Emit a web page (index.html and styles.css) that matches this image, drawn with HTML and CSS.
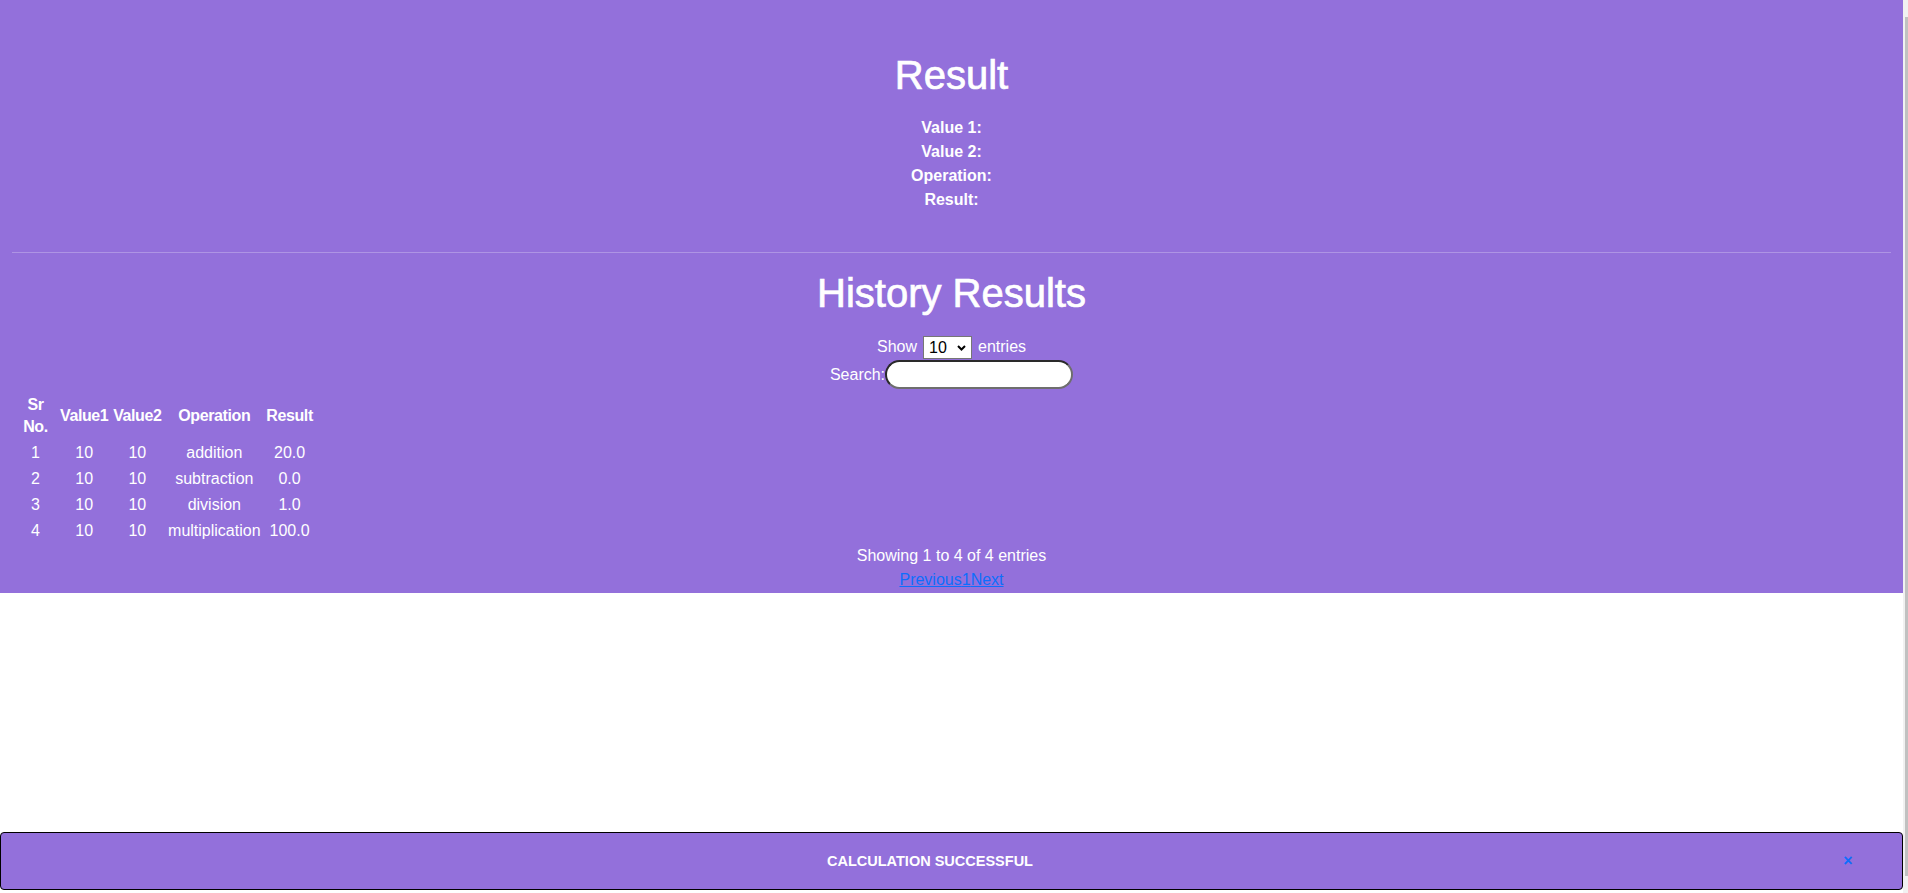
FILE: index.html
```html
<!DOCTYPE html>
<html lang="en">
<head>
<meta charset="utf-8">
<title>Result</title>
<link rel="stylesheet" href="styles.css">
</head>
<body>
<div class="page">
  <main class="panel">
    <section class="result">
      <h1 class="title">Result</h1>
      <div class="values">
        <div><b>Value 1:</b> <span></span></div>
        <div><b>Value 2:</b> <span></span></div>
        <div><b>Operation:</b> <span></span></div>
        <div><b>Result:</b> <span></span></div>
      </div>
    </section>
    <hr class="divider">
    <section class="history">
      <h1 class="title">History Results</h1>
      <div class="length">
        <span>Show</span>
        <span class="select-wrap">
          <select class="select">
            <option>10</option>
            <option>25</option>
            <option>50</option>
            <option>100</option>
          </select>
          <svg class="chev" width="9" height="6" viewBox="0 0 9 6"><path d="M1 1l3.5 3.5L8 1" fill="none" stroke="#000" stroke-width="2"/></svg>
        </span>
        <span>entries</span>
      </div>
      <div class="search"><label class="search-label">Search:<input class="search-input" type="search"></label></div>
      <table class="grid">
        <thead>
          <tr>
            <th class="c-sr">Sr No.</th>
            <th class="c-v1">Value1</th>
            <th class="c-v2">Value2</th>
            <th class="c-op">Operation</th>
            <th class="c-res">Result</th>
          </tr>
        </thead>
        <tbody>
          <tr><td>1</td><td>10</td><td>10</td><td>addition</td><td>20.0</td></tr>
          <tr><td>2</td><td>10</td><td>10</td><td>subtraction</td><td>0.0</td></tr>
          <tr><td>3</td><td>10</td><td>10</td><td>division</td><td>1.0</td></tr>
          <tr><td>4</td><td>10</td><td>10</td><td>multiplication</td><td>100.0</td></tr>
        </tbody>
      </table>
      <div class="info">Showing 1 to 4 of 4 entries</div>
      <div class="paginate"><a href="#" class="pg">Previous</a><a href="#" class="pg">1</a><a href="#" class="pg">Next</a></div>
    </section>
  </main>
</div>
<div class="toast">
  <span class="toast-msg">CALCULATION SUCCESSFUL</span>
  <button class="toast-close" type="button">×</button>
</div>
<div class="scrollbar"><div class="thumb"></div></div>
</body>
</html>
```
FILE: styles.css
```css
html, body {
  margin: 0;
  padding: 0;
  background: #fff;
}
body {
  font-family: "Liberation Sans", Arial, sans-serif;
  font-size: 16px;
  line-height: 24px;
  color: #fff;
}
.page {
  margin-right: 5px;
}
.panel {
  display: block;
  background: #9370db;
  padding: 51px 12px 1px;
  text-align: center;
}
.title {
  font-size: 40px;
  font-weight: 400;
  line-height: 48px;
  margin: 0 0 8px;
  -webkit-text-stroke: 0.7px #fff;
}
.values {
  margin: 17px 0 40px;
  font-weight: 700;
}
.values b {
  font-weight: 700;
}
.divider {
  border: 0;
  border-top: 1px solid rgba(255, 255, 255, 0.25);
  height: 0;
  margin: 16px 0;
}
.length {
  margin-top: 18px;
  height: 24px;
  display: flex;
  justify-content: center;
  align-items: center;
  gap: 6px;
}
.select-wrap {
  position: relative;
  display: inline-block;
  height: 23px;
}
.select {
  -webkit-appearance: none;
  appearance: none;
  box-sizing: border-box;
  width: 49px;
  height: 23px;
  border: 1px solid #767676;
  border-radius: 0;
  background: #fff;
  color: #000;
  font-family: "Liberation Sans", Arial, sans-serif;
  font-size: 16px;
  padding: 0 0 0 5px;
  margin: 0;
  display: block;
}
.chev {
  position: absolute;
  right: 6px;
  top: 9px;
  pointer-events: none;
}
.search {
  height: 31px;
  display: flex;
  justify-content: center;
  align-items: center;
}
.search-label {
  display: flex;
  align-items: center;
}
.search-input {
  box-sizing: border-box;
  width: 188px;
  height: 29px;
  border-width: 2px;
  border-style: solid;
  border-color: #2a2a2a #6e6e6e #6e6e6e #2a2a2a;
  border-radius: 15px;
  background: #fff;
  margin: 0;
  padding: 0 8px;
  font-size: 14px;
  outline: none;
}
.grid {
  border-collapse: separate;
  border-spacing: 2px;
  line-height: 22px;
  margin: 0;
}
.grid th,
.grid td {
  padding: 2px 1px 0;
  text-align: center;
  vertical-align: middle;
}
.grid th {
  font-weight: 700;
  letter-spacing: -0.4px;
}
.c-sr { width: 41px; }
.c-v1 { width: 48px; }
.c-v2 { width: 50px; }
.c-op { width: 96px; }
.c-res { width: 46px; }
.info,
.paginate {
  line-height: 24px;
}
.pg {
  color: #0d6efd;
  text-decoration: underline;
}
.toast {
  position: fixed;
  left: 0;
  bottom: 3px;
  width: calc(100% - 5px);
  height: 58px;
  box-sizing: border-box;
  border: 1px solid #000;
  border-radius: 4px;
  background: #9370db;
  display: flex;
  align-items: center;
  padding: 0 48px 0 17px;
}
.toast-msg {
  flex: 1;
  text-align: center;
  font-weight: 700;
  font-size: 14.5px;
  color: #fff;
}
.toast-close {
  width: 12px;
  padding: 0;
  border: 0;
  background: none;
  color: #0d6efd;
  font-family: "Liberation Sans", Arial, sans-serif;
  font-size: 16px;
  font-weight: 700;
  line-height: 16px;
  cursor: pointer;
}
.scrollbar {
  position: fixed;
  top: 0;
  right: 0;
  width: 5px;
  height: 100%;
  background: #f1f1f1;
}
.thumb {
  margin: 17px 0 0 2px;
  height: calc(100% - 34px);
  background: #c1c1c1;
}
```
